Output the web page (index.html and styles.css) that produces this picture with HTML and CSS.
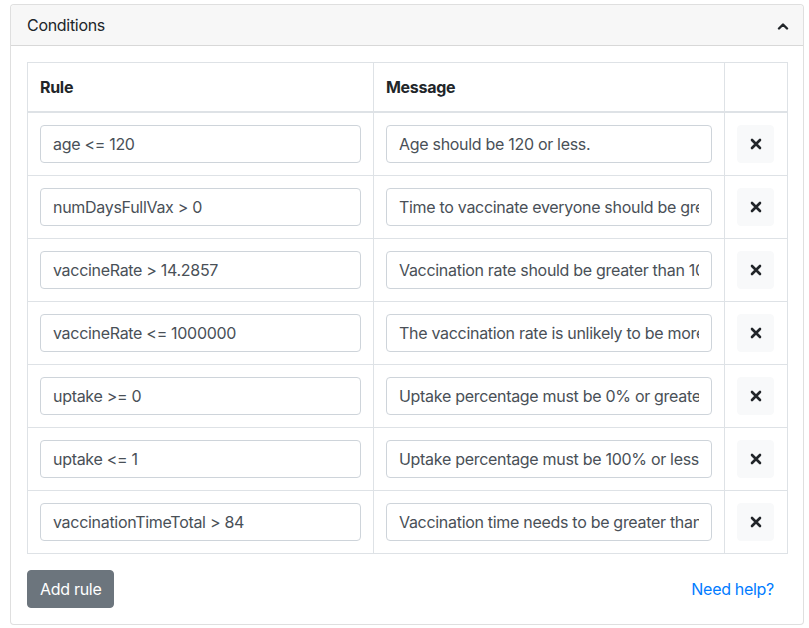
FILE: index.html
```html
<!DOCTYPE html>
<html>
<head>
<meta charset="utf-8">
<link rel="stylesheet" href="styles.css">
</head>
<body>
<div class="page">
  <div class="card">
    <div class="card-header">
      <span>Conditions</span>
      <svg class="chev" width="12" height="8" viewBox="0 0 12 8"><polyline points="2,6.5 6,2.5 10,6.5" fill="none" stroke="#212529" stroke-width="2.4" stroke-linecap="round" stroke-linejoin="round"/></svg>
    </div>
    <div class="card-body">
      <table class="rules">
        <thead>
          <tr><th class="c1">Rule</th><th class="c2">Message</th><th class="c3"></th></tr>
        </thead>
        <tbody>
          <tr><td><input class="field" value="age &lt;= 120"></td><td><input class="field" value="Age should be 120 or less."></td><td><button class="del"><svg width="12" height="12" viewBox="0 0 12 12"><path d="M2 2L10 10M10 2L2 10" stroke="#212529" stroke-width="2.6" stroke-linecap="round"/></svg></button></td></tr>
          <tr><td><input class="field" value="numDaysFullVax &gt; 0"></td><td><input class="field" value="Time to vaccinate everyone should be greater than 0."></td><td><button class="del"><svg width="12" height="12" viewBox="0 0 12 12"><path d="M2 2L10 10M10 2L2 10" stroke="#212529" stroke-width="2.6" stroke-linecap="round"/></svg></button></td></tr>
          <tr><td><input class="field" value="vaccineRate &gt; 14.2857"></td><td><input class="field" value="Vaccination rate should be greater than 100 per week."></td><td><button class="del"><svg width="12" height="12" viewBox="0 0 12 12"><path d="M2 2L10 10M10 2L2 10" stroke="#212529" stroke-width="2.6" stroke-linecap="round"/></svg></button></td></tr>
          <tr><td><input class="field" value="vaccineRate &lt;= 1000000"></td><td><input class="field" value="The vaccination rate is unlikely to be more than that."></td><td><button class="del"><svg width="12" height="12" viewBox="0 0 12 12"><path d="M2 2L10 10M10 2L2 10" stroke="#212529" stroke-width="2.6" stroke-linecap="round"/></svg></button></td></tr>
          <tr><td><input class="field" value="uptake &gt;= 0"></td><td><input class="field" value="Uptake percentage must be 0% or greater."></td><td><button class="del"><svg width="12" height="12" viewBox="0 0 12 12"><path d="M2 2L10 10M10 2L2 10" stroke="#212529" stroke-width="2.6" stroke-linecap="round"/></svg></button></td></tr>
          <tr><td><input class="field" value="uptake &lt;= 1"></td><td><input class="field" value="Uptake percentage must be 100% or less."></td><td><button class="del"><svg width="12" height="12" viewBox="0 0 12 12"><path d="M2 2L10 10M10 2L2 10" stroke="#212529" stroke-width="2.6" stroke-linecap="round"/></svg></button></td></tr>
          <tr><td><input class="field" value="vaccinationTimeTotal &gt; 84"></td><td><input class="field" value="Vaccination time needs to be greater than 84 days."></td><td><button class="del"><svg width="12" height="12" viewBox="0 0 12 12"><path d="M2 2L10 10M10 2L2 10" stroke="#212529" stroke-width="2.6" stroke-linecap="round"/></svg></button></td></tr>
        </tbody>
      </table>
      <div class="actions">
        <button class="add">Add rule</button>
        <a class="help" href="#">Need help?</a>
      </div>
    </div>
  </div>
</div>
</body>
</html>
```

FILE: styles.css
```css
* { box-sizing: border-box; }
html, body { margin: 0; padding: 0; background: #fff; }
body {
  font-family: Inter, "Noto Sans", "Liberation Sans", sans-serif;
  font-size: 16px;
  line-height: 24px;
  letter-spacing: -0.3px;
  color: #212529;
}
.page { padding: 4px 5px 4px 10px; }
.card {
  border: 1px solid rgba(0,0,0,.125);
  border-radius: 4px;
  background: #fff;
}
.card-header {
  display: flex;
  justify-content: space-between;
  align-items: center;
  height: 41px;
  padding: 0 16px;
  background: #f7f7f7;
  border-bottom: 1px solid rgba(0,0,0,.125);
  border-radius: 4px 4px 0 0;
}
.chev { margin-right: -2px; margin-top: 1px; }
.card-body { padding: 16px; }
.rules {
  width: 100%;
  border-collapse: collapse;
  table-layout: fixed;
}
.rules th, .rules td {
  border: 1px solid #dee2e6;
  padding: 12px;
  vertical-align: middle;
}
.rules th {
  text-align: left;
  font-weight: 700;
  border-bottom: 2px solid #dee2e6;
  height: 49px;
}
.c1 { width: 346px; }
.c2 { width: 351px; }
.c3 { width: 63px; }
.field {
  display: block;
  width: 100%;
  height: 38px;
  padding: 6px 12px;
  font: inherit;
  letter-spacing: inherit;
  color: #495057;
  background: #fff;
  border: 1px solid #ced4da;
  border-radius: 4px;
  outline: none;
}
.del {
  display: flex;
  align-items: center;
  justify-content: center;
  width: 37px;
  height: 38px;
  padding: 0;
  background: #f8f9fa;
  border: 1px solid #f8f9fa;
  border-radius: 4px;
}
.actions {
  display: flex;
  justify-content: space-between;
  align-items: center;
  margin-top: 16px;
}
.add {
  height: 38px;
  padding: 6px 12px;
  font: inherit;
  letter-spacing: inherit;
  color: #fff;
  background: #6c757d;
  border: 1px solid #6c757d;
  border-radius: 4px;
}
.help {
  color: #007bff;
  text-decoration: none;
  margin-right: 13px;
}
```
